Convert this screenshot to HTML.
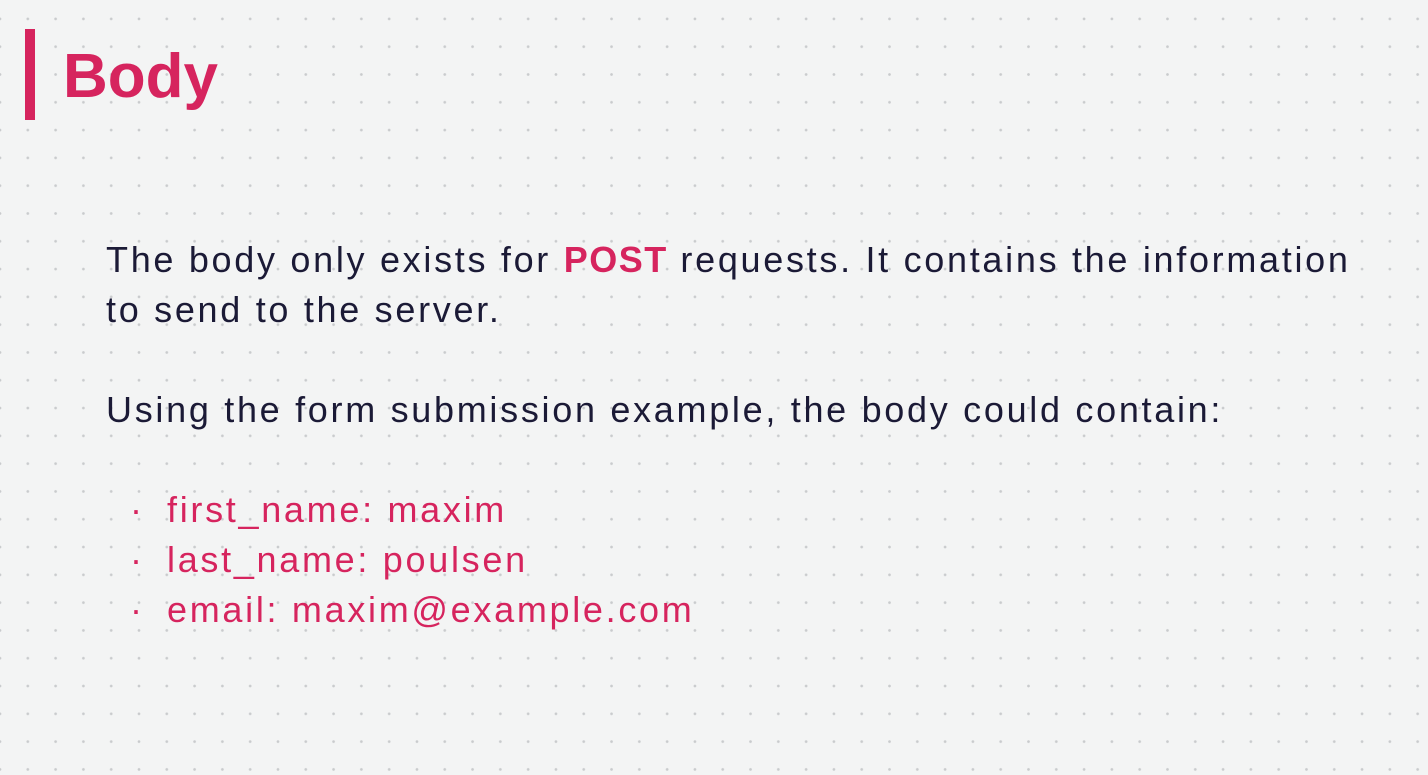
<!DOCTYPE html>
<html><head><meta charset="utf-8"><style>
html,body{margin:0;padding:0}
body{width:1428px;height:775px;overflow:hidden;background:#f3f4f4;
background-image:radial-gradient(circle,#c9cbcd 1.1px,transparent 1.6px);
background-size:27.8px 27.8px;background-position:-13.9px 5px;
font-family:"Liberation Sans",sans-serif;position:relative}
.bar{position:absolute;left:25px;top:29px;width:10px;height:91px;background:#d6245e}
h1{position:absolute;left:63px;top:37px;margin:0;font-size:62px;font-weight:bold;color:#d6245e;line-height:80px;letter-spacing:0px}
.p{position:absolute;left:106px;font-size:36px;letter-spacing:2.7px;color:#1b1a36;line-height:50px;white-space:nowrap}
.hl{color:#d6245e;font-weight:bold;letter-spacing:1.5px}
ul{position:absolute;left:106px;top:485px;margin:0;padding:0;list-style:none;font-size:36px;letter-spacing:2.7px;line-height:50px;color:#d6245e}
li{position:relative;padding-left:61px;white-space:nowrap}
li:before{content:"·";position:absolute;left:24px;color:#d6245e}
</style></head><body>
<div class="bar"></div>
<h1>Body</h1>
<div class="p" style="top:235px">The body only exists for <span class="hl">POST</span> requests. It contains the information<br>to send to the server.</div>
<div class="p" style="top:385px">Using the form submission example, the body could contain:</div>
<ul><li>first_name: maxim</li><li>last_name: poulsen</li><li>email: maxim@example.com</li></ul>
</body></html>
